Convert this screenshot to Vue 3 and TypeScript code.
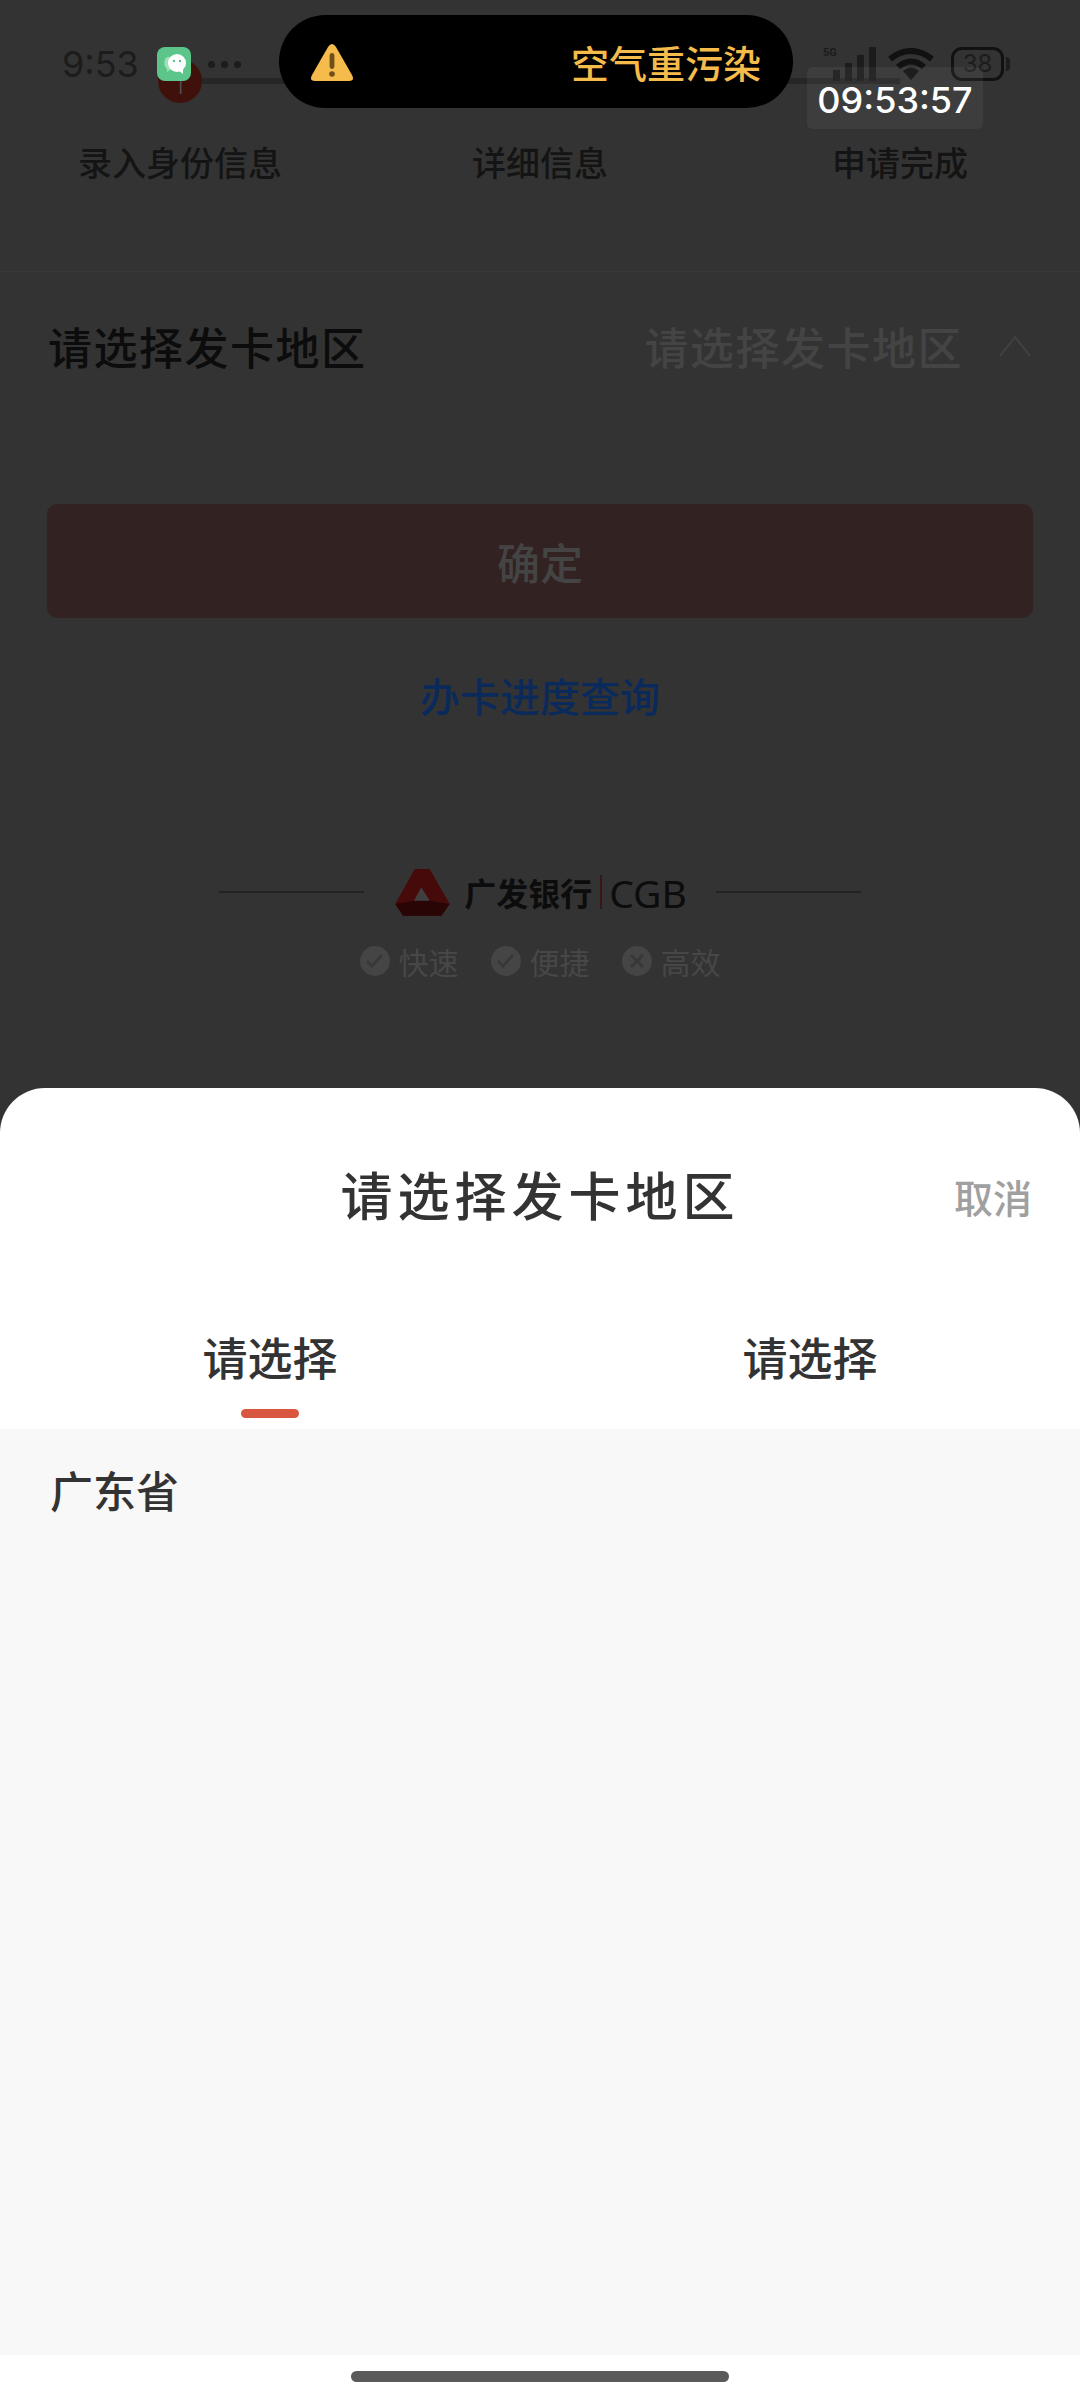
<script setup lang="ts">
const steps: string[] = ['录入身份信息', '详细信息', '申请完成']
const perks: { label: string; mark: string }[] = [
  { label: '快速', mark: 'M7 15 L12 20 L22 9' },
  { label: '便捷', mark: 'M7 15 L12 20 L22 9' },
  { label: '高效', mark: 'M9 9 L21 21 M21 9 L9 21' },
]
</script>

<template>
  <div class="screen">
    <main class="page">
      <section class="progress">
        <span class="track"></span>
        <div v-for="(step, i) in steps" :key="step" class="step">
          <span class="node" :class="{ current: i === 0 }">{{ i === 0 ? '1' : '' }}</span>
          <span class="step-label">{{ step }}</span>
        </div>
      </section>

      <section class="field">
        <span class="field-label">请选择发卡地区</span>
        <span class="field-value">请选择发卡地区</span>
        <svg class="chevron" width="34" height="22" viewBox="0 0 34 22">
          <path d="M2 21 L17 2 L32 21" fill="none" stroke="#424242" stroke-width="2" />
        </svg>
      </section>

      <button class="confirm">确定</button>
      <a class="progress-link">办卡进度查询</a>

      <section class="brand">
        <span class="rule"></span>
        <svg class="logo" width="55" height="47" viewBox="0 0 55 47">
          <path d="M19.7 0 H34.7 L54.7 35 L46.3 46.7 H8 L0.3 35 Z" fill="#470a0a" />
          <path d="M0.3 35 L19 31.7 H34.7 L54.7 35 L46.3 46.7 H8 Z" fill="#2a0505" />
          <path d="M26.3 18.3 L34.7 31.7 H19 Z" fill="#3f3f3f" />
        </svg>
        <span class="brand-name">广发银行</span>
        <span class="brand-bar"></span>
        <span class="brand-code">CGB</span>
        <span class="rule"></span>
      </section>

      <section class="perks">
        <div v-for="perk in perks" :key="perk.label" class="perk">
          <svg width="30" height="30" viewBox="0 0 30 30">
            <circle cx="15" cy="15" r="15" fill="#454545" />
            <path :d="perk.mark" fill="none" stroke="#383838" stroke-width="3" />
          </svg>
          <span>{{ perk.label }}</span>
        </div>
      </section>
    </main>

    <section class="sheet">
      <header class="sheet-head">
        <h1>请选择发卡地区</h1>
        <span class="cancel">取消</span>
      </header>
      <nav class="tabs">
        <div class="tab active">请选择</div>
        <div class="tab">请选择</div>
      </nav>
      <div class="options">
        <div class="option">广东省</div>
      </div>
      <div class="home-area"><span class="home-bar"></span></div>
    </section>

    <div class="status">
      <span class="clock">9:53</span>
      <span class="wechat">
        <svg width="34" height="34" viewBox="0 0 34 34">
          <path d="M8 12 Q10 9 14 10 L14 22 L10 25 L10 22 Q6 19 8 12 Z" fill="#9fe0ba" />
          <circle cx="20" cy="16" r="9" fill="#fff" />
          <path d="M21 23 L26 27 L26 20 Z" fill="#fff" />
          <circle cx="17" cy="14" r="1.2" fill="#5bc58a" />
          <circle cx="23" cy="14" r="1.2" fill="#5bc58a" />
        </svg>
      </span>
      <span class="dots"><i></i><i></i><i></i></span>
      <span class="status-gap"></span>
      <svg class="signal" width="54" height="36" viewBox="0 0 54 36">
        <text x="0" y="10" font-size="11" font-weight="700" fill="#1c1c1c" font-family="Roboto, sans-serif">5G</text>
        <rect x="10" y="24" width="7" height="11" fill="#1c1c1c" />
        <rect x="22" y="17" width="7" height="18" fill="#1c1c1c" />
        <rect x="34" y="9" width="7" height="26" fill="#1c1c1c" />
        <rect x="46" y="1" width="7" height="34" fill="#1c1c1c" />
      </svg>
      <svg class="wifi" width="46" height="32" viewBox="0 0 46 32">
        <path d="M2 11 Q23 -5 44 11" fill="none" stroke="#111" stroke-width="6" />
        <path d="M10 19 Q23 8 36 19" fill="none" stroke="#111" stroke-width="6" />
        <path d="M15 23 Q23 16 31 23 L23 32 Z" fill="#111" />
      </svg>
      <span class="battery">38</span>
      <span class="battery-tip"></span>
    </div>

    <div class="island">
      <svg width="44" height="40" viewBox="0 0 44 40">
        <path d="M22 2 Q24 2 26 5 L42 33 Q45 39 39 39 H5 Q-1 39 2 33 L18 5 Q20 2 22 2 Z" fill="#f5bb4b" />
        <rect x="19.6" y="11" width="4.8" height="16" rx="2.4" fill="#70501a" />
        <circle cx="22" cy="32" r="2.8" fill="#70501a" />
      </svg>
      <span class="alert-text">空气重污染</span>
    </div>

    <div class="time-badge">09:53:57</div>
  </div>
</template>

<style>
html, body { margin: 0; background: #333; }
</style>

<style scoped>
.screen {
  position: relative;
  display: flex;
  flex-direction: column;
  width: 1080px;
  height: 2400px;
  overflow: hidden;
  background: #333;
  font-family: "Noto Sans CJK SC", "Noto Sans", sans-serif;
}
.page { flex: 0 0 1088px; display: flex; flex-direction: column; }
.progress {
  position: relative;
  display: grid;
  grid-template-columns: repeat(3, 360px);
  height: 272px;
  padding-top: 59px;
  box-sizing: border-box;
  border-bottom: 1px solid #383838;
}
.track {
  position: absolute;
  left: 180px;
  right: 180px;
  top: 78px;
  height: 6px;
  background: #262626;
}
.step { position: relative; display: flex; flex-direction: column; align-items: center; }
.node {
  width: 44px;
  height: 44px;
  border-radius: 50%;
  text-align: center;
  font: 300 24px/54px Roboto, sans-serif;
  color: #555;
}
.node.current { background: #3f110a; }
.step-label { margin-top: 37px; font-size: 34px; line-height: 44px; font-weight: 500; color: #141414; }
.field {
  display: flex;
  align-items: center;
  height: 148px;
  padding: 0 48px;
  font-size: 44px;
  letter-spacing: 1.5px;
}
.field-label { color: #0c0c0c; font-weight: 500; }
.field-value { margin-left: auto; color: #444; font-weight: 500; }
.chevron { margin-left: 35px; }
.confirm {
  display: block;
  align-self: center;
  width: 986px;
  height: 114px;
  margin-top: 84px;
  border: 0;
  border-radius: 10px;
  background: #332222;
  color: #444;
  font: 500 43px "Noto Sans CJK SC", sans-serif;
}
.progress-link {
  margin-top: 50px;
  text-align: center;
  font-size: 40px;
  line-height: 54px;
  font-weight: 500;
  color: #0b2a5c;
}
.brand {
  display: flex;
  align-items: center;
  justify-content: center;
  margin-top: 145px;
  height: 50px;
}
.rule { width: 145px; height: 2px; background: #232323; }
.logo { margin: 0 14px 0 31px; }
.brand-name { font-size: 32px; font-weight: 700; color: #0c0c0c; }
.brand-bar { width: 2px; height: 34px; margin: 0 7px 0 8px; background: #3f1414; }
.brand-code { margin-right: 29px; font: 400 39px "Noto Sans", sans-serif; color: #0c0c0c; }
.perks { display: flex; justify-content: center; gap: 32px; margin-top: 23px; }
.perk { display: flex; align-items: center; gap: 9px; font-size: 30px; line-height: 42px; color: #474747; }
.sheet {
  flex: 1;
  display: flex;
  flex-direction: column;
  border-radius: 45px 45px 0 0;
  background: #fff;
  color: #333;
}
.sheet-head {
  position: relative;
  display: flex;
  align-items: center;
  justify-content: center;
  height: 140px;
  padding-top: 72px;
  box-sizing: border-box;
}
.sheet-head h1 { margin: 0; font-size: 52px; line-height: 70px; font-weight: 500; letter-spacing: 5px; }
.cancel { position: absolute; right: 48px; top: 82px; font-size: 39px; line-height: 52px; font-weight: 500; color: #a0a0a0; }
.tabs { display: grid; grid-template-columns: 1fr 1fr; height: 201px; padding-top: 99px; padding-bottom: 0; box-sizing: border-box; }
.tab {
  position: relative;
  text-align: center;
  font-size: 45px;
  line-height: 60px;
  font-weight: 500;
}
.tab.active::after {
  content: "";
  position: absolute;
  left: 50%;
  top: 82px;
  width: 58px;
  height: 9px;
  margin-left: -29px;
  border-radius: 5px;
  background: #d9573f;
}
.options { flex: 1; padding: 30px 50px 0; background: #f8f8f8; }
.option { font-size: 43px; line-height: 60px; font-weight: 500; }
.home-area { display: flex; justify-content: center; height: 45px; padding-top: 16px; box-sizing: border-box; }
.home-bar { width: 378px; height: 11px; border-radius: 6px; background: #5a5a5a; }
.status {
  position: absolute;
  left: 62px;
  top: 44px;
  width: 948px;
  height: 40px;
  display: flex;
  align-items: center;
  color: #1c1c1c;
  font-family: Inter, sans-serif;
}
.clock { font-size: 36px; line-height: 40px; font-weight: 400; }
.wechat {
  display: block;
  width: 34px;
  height: 34px;
  margin-left: 18px;
  border-radius: 8px;
  background: #5bc58a;
}
.dots { display: flex; gap: 6px; margin-left: 17px; }
.dots i { width: 7px; height: 7px; border-radius: 50%; background: #1c1c1c; }
.status-gap { flex: 1; }
.wifi { margin-left: 11px; }
.battery {
  width: 53px;
  height: 34px;
  box-sizing: border-box;
  margin-left: 17px;
  border: 3px solid #111;
  border-radius: 11px;
  font-size: 24px;
  line-height: 28px;
  text-align: center;
}
.battery-tip {
  width: 4px;
  height: 14px;
  margin-left: 2px;
  border-radius: 0 4px 4px 0;
  background: #1c1c1c;
}
.island {
  position: absolute;
  left: 279px;
  top: 15px;
  width: 514px;
  height: 93px;
  box-sizing: border-box;
  padding: 0 32px 0 31px;
  display: flex;
  align-items: center;
  justify-content: space-between;
  border-radius: 47px;
  background: #000;
}
.alert-text { font-size: 38px; font-weight: 500; color: #f5bb4b; }
.time-badge {
  position: absolute;
  left: 807px;
  top: 67px;
  width: 176px;
  height: 62px;
  border-radius: 6px;
  background: rgba(255, 255, 255, 0.05);
  color: #fff;
  text-align: center;
  font: 500 36px/66px Inter, sans-serif;
}
</style>
